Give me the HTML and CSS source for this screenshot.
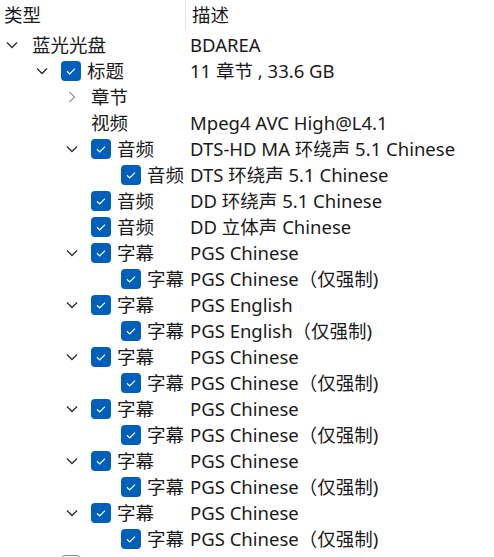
FILE: index.html
```html
<!DOCTYPE html>
<html lang="zh-CN">
<head>
<meta charset="utf-8">
<title>Tree</title>
<link rel="stylesheet" href="styles.css">
</head>
<body>
<div class="tree">
  <div class="header">
    <div class="hcell c1">类型</div>
    <div class="hcell c2">描述</div>
  </div>

  <div class="row">
    <div class="c1 l0"><span class="exp"><svg width="12" height="8" viewBox="0 0 12 8"><path d="M1 1.5 L6 6.5 L11 1.5" class="down"/></svg></span><span class="lbl first">蓝光光盘</span></div>
    <div class="c2">BDAREA</div>
  </div>

  <div class="row">
    <div class="c1 l1"><span class="exp"><svg width="12" height="8" viewBox="0 0 12 8"><path d="M1 1.5 L6 6.5 L11 1.5" class="down"/></svg></span><span class="cb"><svg width="20" height="20" viewBox="0 0 20 20"><path d="M6 10.3 L8.7 12.9 L14 7.6"/></svg></span><span class="lbl">标题</span></div>
    <div class="c2">11 章节 , 33.6 GB</div>
  </div>

  <div class="row">
    <div class="c1 l2"><span class="exp"><svg width="8" height="12" viewBox="0 0 8 12"><path d="M1.5 1 L6.5 6 L1.5 11" class="right"/></svg></span><span class="lbl nocb">章节</span></div>
    <div class="c2"></div>
  </div>

  <div class="row">
    <div class="c1 l2"><span class="exp"></span><span class="lbl nocb">视频</span></div>
    <div class="c2">Mpeg4 AVC High@L4.1</div>
  </div>

  <div class="row">
    <div class="c1 l2"><span class="exp"><svg width="12" height="8" viewBox="0 0 12 8"><path d="M1 1.5 L6 6.5 L11 1.5" class="down"/></svg></span><span class="cb"><svg width="20" height="20" viewBox="0 0 20 20"><path d="M6 10.3 L8.7 12.9 L14 7.6"/></svg></span><span class="lbl">音频</span></div>
    <div class="c2">DTS-HD MA 环绕声 5.1 Chinese</div>
  </div>

  <div class="row">
    <div class="c1 l3"><span class="exp"></span><span class="cb"><svg width="20" height="20" viewBox="0 0 20 20"><path d="M6 10.3 L8.7 12.9 L14 7.6"/></svg></span><span class="lbl">音频</span></div>
    <div class="c2">DTS 环绕声 5.1 Chinese</div>
  </div>

  <div class="row">
    <div class="c1 l2"><span class="exp"></span><span class="cb"><svg width="20" height="20" viewBox="0 0 20 20"><path d="M6 10.3 L8.7 12.9 L14 7.6"/></svg></span><span class="lbl">音频</span></div>
    <div class="c2">DD 环绕声 5.1 Chinese</div>
  </div>

  <div class="row">
    <div class="c1 l2"><span class="exp"></span><span class="cb"><svg width="20" height="20" viewBox="0 0 20 20"><path d="M6 10.3 L8.7 12.9 L14 7.6"/></svg></span><span class="lbl">音频</span></div>
    <div class="c2">DD 立体声 Chinese</div>
  </div>

  <div class="row">
    <div class="c1 l2"><span class="exp"><svg width="12" height="8" viewBox="0 0 12 8"><path d="M1 1.5 L6 6.5 L11 1.5" class="down"/></svg></span><span class="cb"><svg width="20" height="20" viewBox="0 0 20 20"><path d="M6 10.3 L8.7 12.9 L14 7.6"/></svg></span><span class="lbl">字幕</span></div>
    <div class="c2">PGS Chinese</div>
  </div>
  <div class="row">
    <div class="c1 l3"><span class="exp"></span><span class="cb"><svg width="20" height="20" viewBox="0 0 20 20"><path d="M6 10.3 L8.7 12.9 L14 7.6"/></svg></span><span class="lbl">字幕</span></div>
    <div class="c2">PGS Chinese（仅强制)</div>
  </div>

  <div class="row">
    <div class="c1 l2"><span class="exp"><svg width="12" height="8" viewBox="0 0 12 8"><path d="M1 1.5 L6 6.5 L11 1.5" class="down"/></svg></span><span class="cb"><svg width="20" height="20" viewBox="0 0 20 20"><path d="M6 10.3 L8.7 12.9 L14 7.6"/></svg></span><span class="lbl">字幕</span></div>
    <div class="c2">PGS English</div>
  </div>
  <div class="row">
    <div class="c1 l3"><span class="exp"></span><span class="cb"><svg width="20" height="20" viewBox="0 0 20 20"><path d="M6 10.3 L8.7 12.9 L14 7.6"/></svg></span><span class="lbl">字幕</span></div>
    <div class="c2">PGS English（仅强制)</div>
  </div>

  <div class="row">
    <div class="c1 l2"><span class="exp"><svg width="12" height="8" viewBox="0 0 12 8"><path d="M1 1.5 L6 6.5 L11 1.5" class="down"/></svg></span><span class="cb"><svg width="20" height="20" viewBox="0 0 20 20"><path d="M6 10.3 L8.7 12.9 L14 7.6"/></svg></span><span class="lbl">字幕</span></div>
    <div class="c2">PGS Chinese</div>
  </div>
  <div class="row">
    <div class="c1 l3"><span class="exp"></span><span class="cb"><svg width="20" height="20" viewBox="0 0 20 20"><path d="M6 10.3 L8.7 12.9 L14 7.6"/></svg></span><span class="lbl">字幕</span></div>
    <div class="c2">PGS Chinese（仅强制)</div>
  </div>

  <div class="row">
    <div class="c1 l2"><span class="exp"><svg width="12" height="8" viewBox="0 0 12 8"><path d="M1 1.5 L6 6.5 L11 1.5" class="down"/></svg></span><span class="cb"><svg width="20" height="20" viewBox="0 0 20 20"><path d="M6 10.3 L8.7 12.9 L14 7.6"/></svg></span><span class="lbl">字幕</span></div>
    <div class="c2">PGS Chinese</div>
  </div>
  <div class="row">
    <div class="c1 l3"><span class="exp"></span><span class="cb"><svg width="20" height="20" viewBox="0 0 20 20"><path d="M6 10.3 L8.7 12.9 L14 7.6"/></svg></span><span class="lbl">字幕</span></div>
    <div class="c2">PGS Chinese（仅强制)</div>
  </div>

  <div class="row">
    <div class="c1 l2"><span class="exp"><svg width="12" height="8" viewBox="0 0 12 8"><path d="M1 1.5 L6 6.5 L11 1.5" class="down"/></svg></span><span class="cb"><svg width="20" height="20" viewBox="0 0 20 20"><path d="M6 10.3 L8.7 12.9 L14 7.6"/></svg></span><span class="lbl">字幕</span></div>
    <div class="c2">PGS Chinese</div>
  </div>
  <div class="row">
    <div class="c1 l3"><span class="exp"></span><span class="cb"><svg width="20" height="20" viewBox="0 0 20 20"><path d="M6 10.3 L8.7 12.9 L14 7.6"/></svg></span><span class="lbl">字幕</span></div>
    <div class="c2">PGS Chinese（仅强制)</div>
  </div>

  <div class="row">
    <div class="c1 l2"><span class="exp"><svg width="12" height="8" viewBox="0 0 12 8"><path d="M1 1.5 L6 6.5 L11 1.5" class="down"/></svg></span><span class="cb"><svg width="20" height="20" viewBox="0 0 20 20"><path d="M6 10.3 L8.7 12.9 L14 7.6"/></svg></span><span class="lbl">字幕</span></div>
    <div class="c2">PGS Chinese</div>
  </div>
  <div class="row">
    <div class="c1 l3"><span class="exp"></span><span class="cb"><svg width="20" height="20" viewBox="0 0 20 20"><path d="M6 10.3 L8.7 12.9 L14 7.6"/></svg></span><span class="lbl">字幕</span></div>
    <div class="c2">PGS Chinese（仅强制)</div>
  </div>

  <div class="row">
    <div class="c1 l1"><span class="exp"></span><span class="cb off"></span><span class="lbl"></span></div>
    <div class="c2"></div>
  </div>
</div>
</body>
</html>
```

FILE: styles.css
```css
html, body {
  margin: 0;
  padding: 0;
  background: #ffffff;
  overflow: hidden;
}

body {
  font-family: "Noto Sans", "Noto Sans CJK SC", sans-serif;
  font-size: 18.5px;
  color: #1a1a1a;
}

.tree {
  display: flex;
  flex-direction: column;
  width: 494px;
}

.header {
  display: flex;
  height: 32px;
  align-items: stretch;
}

.hcell {
  display: flex;
  align-items: center;
  padding-bottom: 3px;
  box-sizing: border-box;
  height: 31px;
}

.header .c1 {
  width: 186px;
  padding-left: 4px;
  border-right: 1px solid #e5e5e5;
}

.header .c2 {
  padding-left: 6px;
}

.row {
  display: flex;
  height: 26px;
  align-items: center;
  white-space: nowrap;
}

.row .c1 {
  width: 186px;
  flex: none;
  display: flex;
  align-items: center;
  box-sizing: border-box;
  overflow: visible;
}

.row .c2 {
  padding-left: 4px;
  line-height: 26px;
}

.l0 { padding-left: 0; }
.l1 { padding-left: 30px; }
.l2 { padding-left: 60px; }
.l3 { padding-left: 90px; }

.exp {
  width: 24px;
  height: 26px;
  flex: none;
  display: flex;
  align-items: center;
  justify-content: center;
}

.exp svg {
  display: block;
}

.down {
  fill: none;
  stroke: #2b2b2b;
  stroke-width: 1.3;
}

.right {
  fill: none;
  stroke: #9a9a9a;
  stroke-width: 1.3;
}

.cb {
  width: 20px;
  height: 20px;
  flex: none;
  margin-left: 7px;
  margin-right: 6px;
  border-radius: 4px;
  background: #005fb8;
  box-sizing: border-box;
}

.cb svg {
  display: block;
}

.cb path {
  fill: none;
  stroke: #ffffff;
  stroke-width: 1.2;
}

.cb.off {
  background: #ffffff;
  border: 1px solid #8a8a8a;
}

.lbl {
  line-height: 26px;
}

.lbl.first {
  margin-left: 8px;
}

.lbl.nocb {
  margin-left: 7px;
}
```
